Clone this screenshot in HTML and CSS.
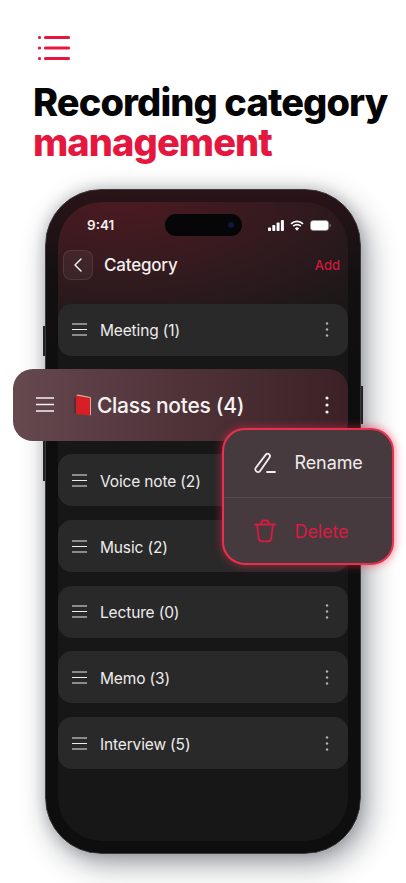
FILE: index.html
```html
<!DOCTYPE html>
<html lang="en">
<head>
<meta charset="utf-8">
<title>Recording category management</title>
<link rel="stylesheet" href="styles.css">
</head>
<body>
<main class="page">
  <header class="hero">
    <svg class="hero-icon" width="34" height="28" viewBox="0 0 34 28" fill="none" stroke="#e5173f" stroke-width="3.200" stroke-linecap="round"><path d="M2.500 2.500h.1M2.500 13h.1M2.500 23.500h.1M8.500 2.500h23M8.500 13h23M8.500 23.500h23"/></svg>
    <h1 class="title">Recording category <span class="accent">management</span></h1>
  </header>
  <section class="phone">
    <i class="side side-a"></i><i class="side side-b"></i><i class="side side-c"></i><i class="side side-d"></i>
    <div class="screen">
      <div class="status">
        <span class="time">9:41</span>
        <div class="island"><i class="camera"></i></div>
        <div class="status-icons">
          <svg width="16" height="11" viewBox="0 0 16 11" fill="#fff"><rect x="0" y="7.500" width="3" height="3.500" rx=".8"/><rect x="4.300" y="5" width="3" height="6" rx=".8"/><rect x="8.600" y="2.500" width="3" height="8.500" rx=".8"/><rect x="12.900" y="0" width="3" height="11" rx=".8"/></svg>
          <svg width="14" height="11" viewBox="0 0 14 11" fill="none" stroke="#fff" stroke-width="1.700"><path d="M1 3.800a8.500 8.500 0 0 1 12 0M3.200 6.100a5.400 5.400 0 0 1 7.600 0"/><path d="M7 10.800 4.900 8.400a3 3 0 0 1 4.200 0z" fill="#fff" stroke="none"/></svg>
          <svg width="21" height="11" viewBox="0 0 21 11"><rect x=".4" y=".4" width="18.200" height="10.200" rx="3" fill="#fff" stroke="#888" stroke-width=".6"/><path d="M19.600 3.800c.8.300 1.200 1 1.200 1.700s-.4 1.400-1.200 1.700z" fill="#888"/></svg>
        </div>
      </div>
      <nav class="nav">
        <div class="back"><svg width="10" height="16" viewBox="0 0 10 16" fill="none" stroke="#f2eeee" stroke-width="1.500" stroke-linecap="round" stroke-linejoin="round"><path d="M8 2 2 8l6 6"/></svg></div>
        <span class="nav-title">Category</span>
        <span class="add">Add</span>
      </nav>
      <ul class="list">
        <li class="row"><svg class="bars" width="15" height="13" viewBox="0 0 15 13" stroke="#efeded" stroke-width="1.200"><path d="M0 1h15M0 6.500h15M0 12h15"/></svg><span class="label">Meeting (1)</span><svg class="dots" width="4" height="15" viewBox="0 0 4 15" fill="#b0b0b0"><circle cx="2" cy="1.500" r="1.200"/><circle cx="2" cy="7.500" r="1.200"/><circle cx="2" cy="13.500" r="1.200"/></svg></li>
        <li class="row row-active"><svg class="bars" width="18" height="15" viewBox="0 0 18 15" stroke="#f6f2f2" stroke-width="1.400"><path d="M0 1h18M0 7.500h18M0 14h18"/></svg>
          <svg class="book" width="18" height="22" viewBox="0 0 18 22"><path d="M1 4 3 3v17l-2-2z" fill="#4a3236"/><path d="M3 1.500 17 4v17.500L3 20z" fill="#d81f26"/><path d="M3 1.500 5 .5 17.500 3 17 4z" fill="#e9a59c"/><path d="m17 21.500.8-.6V3l-.8 1z" fill="#f0c7bd"/></svg>
          <span class="label label-active">Class notes (4)</span><svg class="dots" width="4" height="18" viewBox="0 0 4 18" fill="#f2eeee"><circle cx="2" cy="2" r="1.600"/><circle cx="2" cy="9" r="1.600"/><circle cx="2" cy="16" r="1.600"/></svg></li>
        <li class="row"><svg class="bars" width="15" height="13" viewBox="0 0 15 13" stroke="#efeded" stroke-width="1.200"><path d="M0 1h15M0 6.500h15M0 12h15"/></svg><span class="label">Voice note (2)</span></li>
        <li class="row"><svg class="bars" width="15" height="13" viewBox="0 0 15 13" stroke="#efeded" stroke-width="1.200"><path d="M0 1h15M0 6.500h15M0 12h15"/></svg><span class="label">Music (2)</span></li>
        <li class="row"><svg class="bars" width="15" height="13" viewBox="0 0 15 13" stroke="#efeded" stroke-width="1.200"><path d="M0 1h15M0 6.500h15M0 12h15"/></svg><span class="label">Lecture (0)</span><svg class="dots" width="4" height="15" viewBox="0 0 4 15" fill="#b0b0b0"><circle cx="2" cy="1.500" r="1.200"/><circle cx="2" cy="7.500" r="1.200"/><circle cx="2" cy="13.500" r="1.200"/></svg></li>
        <li class="row"><svg class="bars" width="15" height="13" viewBox="0 0 15 13" stroke="#efeded" stroke-width="1.200"><path d="M0 1h15M0 6.500h15M0 12h15"/></svg><span class="label">Memo (3)</span><svg class="dots" width="4" height="15" viewBox="0 0 4 15" fill="#b0b0b0"><circle cx="2" cy="1.500" r="1.200"/><circle cx="2" cy="7.500" r="1.200"/><circle cx="2" cy="13.500" r="1.200"/></svg></li>
        <li class="row"><svg class="bars" width="15" height="13" viewBox="0 0 15 13" stroke="#efeded" stroke-width="1.200"><path d="M0 1h15M0 6.500h15M0 12h15"/></svg><span class="label">Interview (5)</span><svg class="dots" width="4" height="15" viewBox="0 0 4 15" fill="#b0b0b0"><circle cx="2" cy="1.500" r="1.200"/><circle cx="2" cy="7.500" r="1.200"/><circle cx="2" cy="13.500" r="1.200"/></svg></li>
      </ul>
    </div>
    <div class="menu">
      <div class="menu-item menu-rename">
        <svg width="22" height="22" viewBox="0 0 22 22" fill="none" stroke="#f3efef" stroke-width="1.800" stroke-linecap="round" stroke-linejoin="round"><path d="M2 15.500 11.800 2.600a2.300 2.300 0 0 1 3.200-.4 2.300 2.300 0 0 1 .5 3.200L6.300 18.800a2.600 2.600 0 0 1-3.300 1 2.700 2.700 0 0 1-1-4.300zM13 20h8"/></svg>
        <span>Rename</span>
      </div>
      <div class="menu-item menu-delete">
        <svg width="22" height="24" viewBox="0 0 22 24" fill="none" stroke="#d81b42" stroke-width="1.800" stroke-linecap="round" stroke-linejoin="round"><path d="M1 5.500h20M7.500 5.500V3.500a2 2 0 0 1 2-2h3a2 2 0 0 1 2 2v2M3 5.500l1.800 14.200a3 3 0 0 0 3 2.600h6.400a3 3 0 0 0 3-2.600L19 5.500"/></svg>
        <span>Delete</span>
      </div>
    </div>
  </section>
</main>
</body>
</html>
```
FILE: styles.css
```css
* { box-sizing: border-box; }
html, body { margin: 0; padding: 0; background: #fff; }
body { font-family: "Inter", "Liberation Sans", sans-serif; }
.page { width: 406px; height: 883px; overflow: hidden; padding: 35px 0 0 33px; }
.hero-icon { display: block; margin-left: 4px; }
.title { margin: 19px 0 0; width: 373px; font-size: 38px; line-height: 40px; font-weight: 800; letter-spacing: -.9px; color: #050505; }
.accent { display: block; color: #e5173f; }
.phone { position: relative; width: 316px; height: 665px; margin: 27px 0 0 12px; padding: 12px; border-radius: 56px; background: linear-gradient(180deg, #2a1418 0, #141012 12%, #0e0e0e 30%); border: 1.500px solid #3a3a3a; box-shadow: 6px 10px 30px rgba(20, 25, 35, .42), 0 0 14px rgba(20, 25, 35, .2); }
.side { position: absolute; width: 2px; background: #222; }
.side-a { left: -3px; top: 136px; height: 30px; }
.side-b { left: -3px; top: 205px; height: 22px; }
.side-c { left: -3px; top: 245px; height: 46px; }
.side-d { right: -3px; top: 196px; height: 38px; }
.screen { height: 100%; border-radius: 44px; padding-top: 12px; background: radial-gradient(ellipse 340px 150px at 22% 0, #4b1a21 0, #301a1e 55%, #181717 100%) #171717; }
.status { display: flex; align-items: center; height: 22px; padding: 0 17px 0 29px; }
.time { width: 78px; color: #f2efef; font-size: 13.500px; font-weight: 600; }
.island { position: relative; width: 77px; height: 22px; border-radius: 11px; background: #060608; }
.camera { position: absolute; right: 8px; top: 8px; width: 6px; height: 6px; border-radius: 50%; background: #12183a; }
.status-icons { display: flex; align-items: center; gap: 6px; margin-left: auto; }
.status-icons svg { display: block; }
.nav { display: flex; align-items: center; height: 30px; margin-top: 14px; padding: 0 8px 0 5px; }
.back { display: flex; align-items: center; justify-content: center; width: 30px; height: 30px; border-radius: 8px; background: rgba(255, 255, 255, .05); border: 1px solid rgba(255, 255, 255, .09); }
.nav-title { margin-left: 11px; color: #f1eeee; font-size: 17px; font-weight: 500; letter-spacing: -.2px; }
.add { margin-left: auto; color: #cf1a3d; font-size: 13px; font-weight: 500; }
.list { display: flex; flex-direction: column; gap: 13.700px; list-style: none; margin: 23.500px 0 0; padding: 0; }
.row { display: flex; align-items: center; height: 52px; padding: 0 19px 0 14px; border-radius: 14px; background: #292929; }
.bars { flex: none; }
.label { margin-left: 13px; padding-top: 2px; color: #eeecec; font-size: 15.500px; letter-spacing: -.15px; }
.dots { margin-left: auto; }
.row-active { height: 71.500px; margin-left: -45px; padding-left: 23px; border-radius: 20px; background: linear-gradient(90deg, #66484f 0, #4f3339 50%, #3b2126 100%); position: relative; }
.book { flex: none; margin-left: 19px; }
.label-active { margin-left: 6px; color: #f7f3f3; font-size: 21px; font-weight: 500; letter-spacing: -.3px; }
.menu { position: absolute; left: 175.500px; top: 238px; width: 172px; height: 137px; border-radius: 23px; background: #463a3e; border: 2px solid #e9304f; box-shadow: 0 0 10px rgba(235, 40, 75, .65); }
.menu-item { display: flex; align-items: center; gap: 19px; height: 67px; padding-left: 30px; color: #efecec; font-size: 18px; letter-spacing: -.1px; }
.menu-rename { padding-bottom: 2px; }
.menu-delete { color: #d81b42; border-top: 1px solid rgba(255, 255, 255, .09); }
```
